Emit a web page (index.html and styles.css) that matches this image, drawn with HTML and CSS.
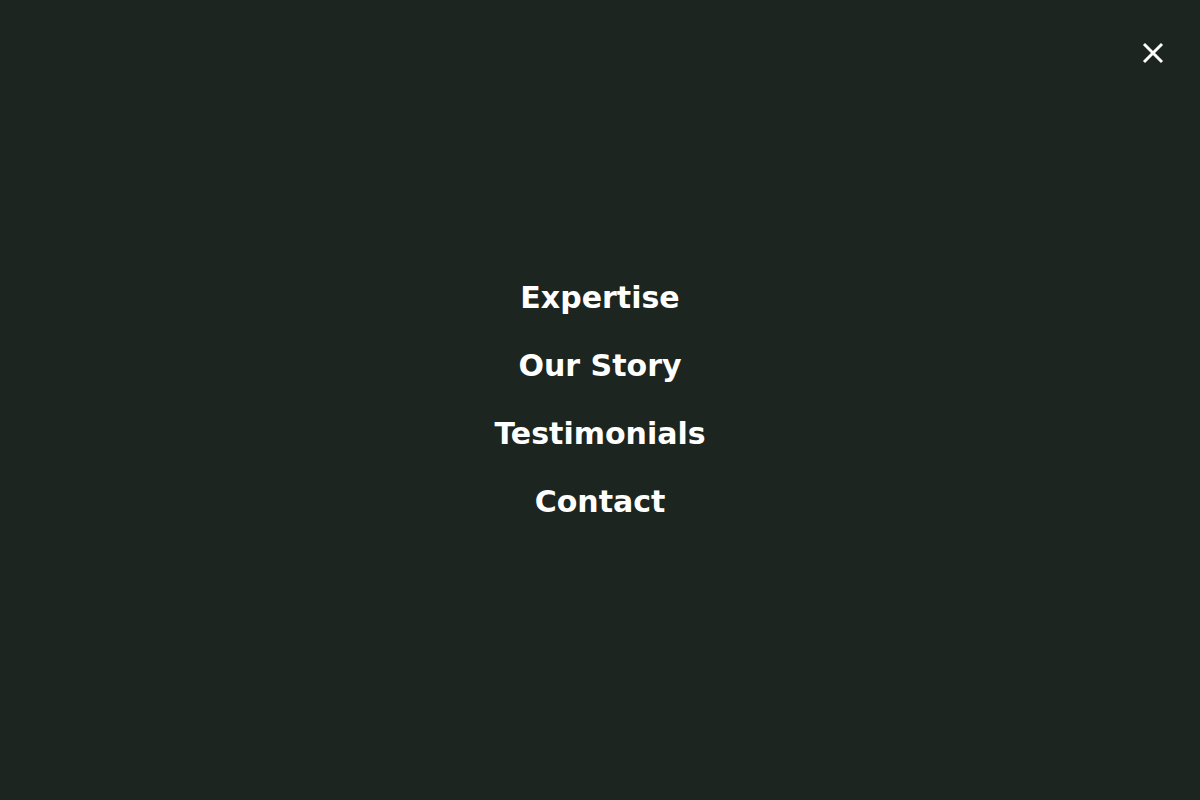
FILE: index.html
```html
<!DOCTYPE html>
<html>
<head>
<meta charset="utf-8">
<link rel="stylesheet" href="styles.css">
</head>
<body>
<div class="overlay">
  <button class="close" aria-label="Close">
    <svg width="24" height="24" viewBox="0 0 24 24"><path d="M3 3L21 21M21 3L3 21" stroke="#fff" stroke-width="3" stroke-linecap="butt" fill="none"/></svg>
  </button>
  <nav class="menu">
    <a href="#">Expertise</a>
    <a href="#">Our Story</a>
    <a href="#">Testimonials</a>
    <a href="#">Contact</a>
  </nav>
</div>
</body>
</html>
```
FILE: styles.css
```css
html, body { margin: 0; padding: 0; }
body { background: #1c251f; font-family: "DejaVu Sans", sans-serif; }
.overlay { position: relative; width: 1200px; height: 800px; display: flex; align-items: center; justify-content: center; }
.close { position: absolute; top: 41px; right: 35px; width: 24px; height: 24px; padding: 0; border: 0; background: none; display: block; }
.close svg { display: block; }
.menu { display: flex; flex-direction: column; align-items: center; gap: 32px; }
.menu a { color: #fff; text-decoration: none; font-weight: bold; font-size: 30px; line-height: 36px; }
```
